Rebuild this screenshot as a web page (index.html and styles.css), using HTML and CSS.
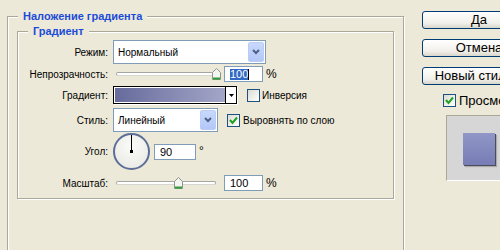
FILE: index.html
```html
<!DOCTYPE html>
<html lang="ru">

<head>
    <meta charset="UTF-8">
    <title>Стиль слоя — Наложение градиента</title>
    <link rel="stylesheet" href="styles.css">
</head>

<body>
    <div class="dialog">
        <div class="group outer">
            <span class="group-title">Наложение градиента</span>

            <div class="group inner">
                <span class="group-title">Градиент</span>

                <div class="row row-mode">
                    <span class="field-label">Режим:</span>
                    <div class="select select-mode">
                        <span class="select-text">Нормальный</span>
                        <span class="select-btn">
                            <svg width="8" height="6" viewBox="0 0 8 6"><polyline points="1,1 4,4 7,1" fill="none" stroke="#4d6185" stroke-width="2"/></svg>
                        </span>
                    </div>
                </div>

                <div class="row row-opacity">
                    <span class="field-label">Непрозрачность:</span>
                    <div class="slider">
                        <div class="track"></div>
                        <svg class="thumb" style="left: 99px;" width="9" height="12" viewBox="0 0 9 12"><path d="M0.5 4.5 L4.5 0.5 L8.5 4.5 V11.5 H0.5 Z" fill="#f4f4f0" stroke="#8b958b"/><rect x="1" y="9.5" width="7" height="2" fill="#2f9e3a"/></svg>
                    </div>
                    <div class="input"><span class="selected">100</span><span class="caret"></span></div>
                    <span class="unit">%</span>
                </div>

                <div class="row row-gradient">
                    <span class="field-label">Градиент:</span>
                    <div class="gradient-picker">
                        <div class="gradient-swatch"></div>
                        <div class="gradient-arrow">
                            <svg width="5" height="3" viewBox="0 0 5 3"><polygon points="0,0 5,0 2.5,3" fill="#000"/></svg>
                        </div>
                    </div>
                    <span class="checkbox"></span>
                    <span class="check-label">Инверсия</span>
                </div>

                <div class="row row-style">
                    <span class="field-label">Стиль:</span>
                    <div class="select select-style">
                        <span class="select-text">Линейный</span>
                        <span class="select-btn">
                            <svg width="8" height="6" viewBox="0 0 8 6"><polyline points="1,1 4,4 7,1" fill="none" stroke="#4d6185" stroke-width="2"/></svg>
                        </span>
                    </div>
                    <span class="checkbox checked">
                        <svg width="11" height="11" viewBox="0 0 11 11"><polyline points="2,5 4.5,8 9,2.5" fill="none" stroke="#21a121" stroke-width="2"/></svg>
                    </span>
                    <span class="check-label align">Выровнять по слою</span>
                </div>

                <div class="row row-angle">
                    <span class="field-label">Угол:</span>
                    <div class="dial">
                        <span class="dial-hand"></span>
                        <span class="dial-dot"></span>
                    </div>
                    <div class="input angle-input">90</div>
                    <span class="unit degree">°</span>
                </div>

                <div class="row row-scale">
                    <span class="field-label">Масштаб:</span>
                    <div class="slider">
                        <div class="track"></div>
                        <svg class="thumb" style="left: 61px;" width="9" height="12" viewBox="0 0 9 12"><path d="M0.5 4.5 L4.5 0.5 L8.5 4.5 V11.5 H0.5 Z" fill="#f4f4f0" stroke="#8b958b"/><rect x="1" y="9.5" width="7" height="2" fill="#2f9e3a"/></svg>
                    </div>
                    <div class="input">100</div>
                    <span class="unit">%</span>
                </div>
            </div>
        </div>

        <div class="side">
            <button class="btn">Да</button>
            <button class="btn">Отмена</button>
            <button class="btn">Новый стиль...</button>
            <div class="preview-check">
                <span class="checkbox checked">
                    <svg width="11" height="11" viewBox="0 0 11 11"><polyline points="2,5 4.5,8 9,2.5" fill="none" stroke="#21a121" stroke-width="2"/></svg>
                </span>
                <span class="check-label big">Просмотр</span>
            </div>
            <div class="preview">
                <div class="preview-square"></div>
            </div>
        </div>
    </div>
</body>

</html>
```

FILE: styles.css
```css
body {
    margin: 0;
    width: 500px;
    height: 250px;
    overflow: hidden;
    background-color: #ece9d8;
    font-family: "Liberation Sans", Arial, sans-serif;
    font-size: 10px;
    color: #000;
}

.dialog {
    display: flex;
    padding-left: 7px;
}

/* etched group boxes */
.group {
    position: relative;
    box-sizing: border-box;
    border: 1px solid #aca899;
    box-shadow: inset 1px 1px 0 #fff, 1px 1px 0 #fff;
}

.group-title {
    position: absolute;
    top: -8px;
    left: 10px;
    padding: 0 5px;
    line-height: 14px;
    background-color: #ece9d8;
    color: #1c4bd8;
    font-size: 11px;
    font-weight: bold;
}

.outer {
    flex-shrink: 0;
    width: 397px;
    height: 260px;
    margin-top: 16px;
    padding: 14px 9px 0;
}

.inner {
    padding: 8px 0 7px;
}

.row {
    display: flex;
    align-items: center;
}

.row-opacity { margin-top: 2px; }
.row-gradient { margin-top: 4px; }
.row-style { margin-top: 4px; }
.row-angle { margin-top: 1px; }
.row-scale { margin-top: 5px; }

.field-label {
    width: 90px;
    margin-right: 5px;
    text-align: right;
}

/* selects */
.select {
    box-sizing: border-box;
    display: flex;
    align-items: center;
    height: 24px;
    border: 1px solid #7f9db9;
    background-color: #fff;
    padding: 1px;
}

.select-mode { width: 153px; }
.select-style { width: 105px; }

.select-text {
    flex: 1;
    padding-left: 3px;
}

.select-btn {
    box-sizing: border-box;
    display: flex;
    align-items: center;
    justify-content: center;
    width: 16px;
    height: 20px;
    border: 1px solid #bccdf5;
    border-radius: 2px;
    background: linear-gradient(#c9d8fc, #b2c8f8);
}

/* sliders */
.slider {
    position: relative;
    display: flex;
    align-items: center;
    width: 107px;
    height: 16px;
}

.track {
    box-sizing: border-box;
    width: 100px;
    height: 4px;
    margin-left: 3px;
    border: 1px solid #a5a5a5;
    border-bottom-color: #d6d6d0;
    border-radius: 2px;
    background-color: #fff;
}

.thumb {
    position: absolute;
    top: 2px;
}

/* text boxes */
.input {
    box-sizing: border-box;
    display: flex;
    align-items: center;
    width: 39px;
    height: 16px;
    margin-left: 4px;
    padding-left: 5px;
    border: 1px solid #7f9db9;
    background-color: #fff;
    font-size: 11px;
}

.selected {
    background-color: #316ac5;
    color: #fff;
    line-height: 11px;
}

.caret {
    width: 1px;
    height: 11px;
    background-color: #000;
}

.unit {
    margin-left: 3px;
    font-size: 12px;
}

.degree {
    align-self: flex-start;
    margin-top: 11px;
}

/* gradient picker */
.gradient-picker {
    box-sizing: border-box;
    display: flex;
    width: 124px;
    height: 18px;
    border: 1px solid #000;
    padding: 1px 0 1px 1px;
    background-color: #fff;
    box-shadow: 1px 1px 0 #fff;
}

.gradient-swatch {
    flex: 1;
    background: linear-gradient(to right, #676b9c, #a3a6c7);
}

.gradient-arrow {
    display: flex;
    align-items: center;
    justify-content: center;
    width: 10px;
    border-left: 1px solid #000;
    margin: -1px 0;
}

/* checkboxes */
.checkbox {
    box-sizing: border-box;
    display: flex;
    align-items: center;
    justify-content: center;
    width: 13px;
    height: 13px;
    margin-left: 10px;
    border: 1px solid #1c5180;
    background: linear-gradient(135deg, #dcdcd5, #fff);
}

.row-style .checkbox {
    margin-left: 9px;
}

.check-label {
    margin-left: 2px;
}

.check-label.align {
    margin-left: 3px;
}

/* angle dial */
.dial {
    position: relative;
    box-sizing: border-box;
    width: 37px;
    height: 37px;
    border: 2px solid #5d6f98;
    border-radius: 50%;
    background: radial-gradient(circle at 50% 35%, #fbfbf9, #e6e6e2);
}

.dial-hand {
    position: absolute;
    left: 16px;
    top: 0;
    width: 1px;
    height: 17px;
    background-color: #000;
}

.dial-dot {
    position: absolute;
    left: 15px;
    top: 15px;
    width: 3px;
    height: 3px;
    background-color: #000;
}

.angle-input {
    width: 42px;
    margin-left: 4px;
}

/* right column */
.side {
    flex-shrink: 0;
    display: flex;
    flex-direction: column;
    margin-left: 18px;
    padding-top: 11px;
}

.btn {
    box-sizing: border-box;
    width: 114px;
    height: 18px;
    margin: 0 0 10px;
    padding: 0;
    border: 1px solid #003c74;
    border-radius: 3px;
    background: linear-gradient(#fff, #f1f0ea 70%, #d9d5ca);
    font-family: inherit;
    font-size: 13px;
    line-height: 14px;
    color: #000;
}

.preview-check {
    display: flex;
    align-items: center;
    margin-top: -2px;
    margin-left: 21px;
}

.preview-check .checkbox {
    margin-left: 0;
}

.check-label.big {
    margin-left: 3px;
    font-size: 13px;
}

.preview {
    box-sizing: border-box;
    width: 70px;
    height: 66px;
    margin-top: 7px;
    margin-left: 24px;
    padding: 17px 0 0 16px;
    border: 1px solid #aca899;
    border-right-color: #fff;
    border-bottom-color: #fff;
    background-color: #d6d6d6;
}

.preview-square {
    width: 32px;
    height: 32px;
    background: linear-gradient(#9096c6, #777db5);
    box-shadow: 1px 1px 0 #4c4c58, 2px 2px 1px rgba(0, 0, 0, 0.2);
}
```
